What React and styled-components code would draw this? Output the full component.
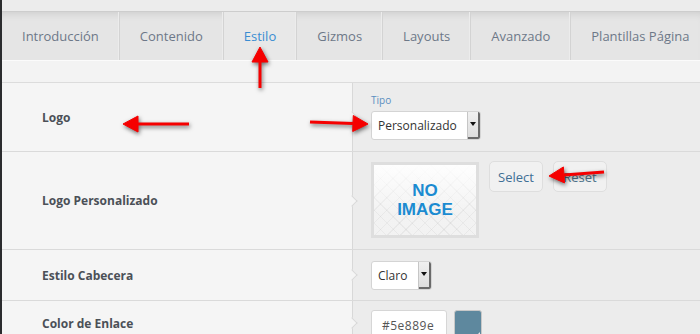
import React from 'react'
import styled, { createGlobalStyle } from 'styled-components'

const Global = createGlobalStyle`
    html, body {
        margin: 0;
        padding: 0;
        background: #ececec;
        overflow: hidden;
    }
    body {
        font-family: "Open Sans", "Noto Sans", sans-serif;
    }
`

const Frame = styled.div`
    position: relative;
    width: 700px;
    height: 334px;
    overflow: hidden;
`

const Shell = styled.div`
    display: flex;
    flex-direction: column;
    height: 100%;
    border-left: 2px solid #2b2c2e;
    background: #ececec;
    & > * {
        flex-shrink: 0;
    }
`

const TopBand = styled.div`
    height: 11px;
    background: #ececec;
    border-bottom: 1px solid #cdcdcd;
`

const TabBar = styled.div`
    display: flex;
    height: 48px;
    background: #e5e5e5;
    box-shadow: inset 0 7px 8px -6px rgba(0, 0, 0, 0.12);
    border-bottom: 1px solid #fbfbfb;
    white-space: nowrap;
`

const Tab = styled.div`
    display: flex;
    align-items: center;
    padding: 0 20px;
    font-size: 13px;
    color: ${props => props.active ? '#3a8dd2' : '#6d7888'};
    border-right: 1px solid #d3d3d3;
    box-shadow: inset -1px 0 0 #ececec;
    background: ${props => props.active ? '#e8e8e8' : 'transparent'};
    flex-shrink: 0;
`

const SubBar = styled.div`
    height: 21px;
    background: #f3f3f3;
    border-bottom: 1px solid #dcdcdc;
`

const Row = styled.div`
    display: grid;
    grid-template-columns: 350px 1fr;
    height: ${props => props.h}px;
    border-bottom: 1px solid #dadada;
`

const Label = styled.div`
    display: flex;
    align-items: ${props => props.top ? 'flex-start' : 'center'};
    padding: ${props => props.top ? '14px' : '0'} 0 0 40px;
    background: #f5f5f5;
    font-size: 12px;
    font-weight: 700;
    color: #4b5057;
`

const Field = styled.div`
    position: relative;
    display: flex;
    flex-direction: ${props => props.column ? 'column' : 'row'};
    align-items: ${props => props.center ? 'center' : 'flex-start'};
    gap: ${props => props.gap || 0}px;
    padding: ${props => props.pt || 0}px 18px 0;
    background: #ececec;
    border-left: 1px solid #d8d8d8;
    &::before {
        content: '';
        position: absolute;
        left: -5px;
        top: ${props => props.notch || '50%'};
        width: 7px;
        height: 7px;
        margin-top: -4px;
        background: #f5f5f5;
        border-top: 1px solid #d8d8d8;
        border-right: 1px solid #d8d8d8;
        transform: rotate(45deg);
    }
`

const Caption = styled.div`
    font-size: 10px;
    line-height: 14px;
    color: #5b8fc0;
    margin-bottom: 4px;
`

const SelectBox = styled.div`
    display: flex;
    align-items: stretch;
    width: ${props => props.w}px;
    height: 29px;
    background: #fff;
    border: 1px solid #d4d4d4;
    border-radius: 3px;
    box-sizing: border-box;
    overflow: hidden;
    font-size: 12px;
    color: #333;
`

const SelectText = styled.div`
    flex: 1;
    display: flex;
    align-items: center;
    padding-left: 6px;
`

const SelectArrow = styled.div`
    width: 12px;
    display: flex;
    align-items: center;
    justify-content: center;
    background: linear-gradient(#f0f0f0, #dcdcdc);
    border-left: 1px solid #c6c6c6;
    box-shadow: inset -2px -2px 0 #6a6a6a;
    &::after {
        content: '';
        margin: 0 2px 3px 0;
        border-left: 3px solid transparent;
        border-right: 3px solid transparent;
        border-top: 4px solid #111;
    }
`

const NoImage = styled.div`
    width: 108px;
    height: 76px;
    box-sizing: border-box;
    border: 3px solid #dedede;
    display: flex;
    align-items: center;
    justify-content: center;
    text-align: center;
    font-family: "Liberation Sans", Arial, sans-serif;
    font-weight: 700;
    font-size: 17px;
    line-height: 19px;
    color: #1b8bd1;
    background:
        linear-gradient(rgba(255,255,255,0.95), rgba(255,255,255,0.2) 70%),
        repeating-linear-gradient(45deg, #f7f7f7 0 8px, #eaeaea 8px 9px),
        repeating-linear-gradient(-45deg, #f7f7f7 0 8px, #eaeaea 8px 9px);
    background-blend-mode: normal, multiply, normal;
`

const Button = styled.div`
    width: 54px;
    height: 31px;
    box-sizing: border-box;
    display: flex;
    align-items: center;
    justify-content: center;
    border: 1px solid #dedede;
    border-radius: 5px;
    background: #f1f1f1;
    font-size: 13px;
    color: ${props => props.tone || '#3f6f95'};
    margin-top: -1px;
`

const ColorInput = styled.div`
    width: 76px;
    height: 30px;
    box-sizing: border-box;
    display: flex;
    align-items: center;
    padding-left: 10px;
    background: #fff;
    border: 1px solid #d6d6d6;
    border-radius: 3px;
    font-size: 12px;
    letter-spacing: 0.5px;
    color: #555;
`

const Swatch = styled.div`
    position: relative;
    width: 28px;
    height: 30px;
    box-sizing: border-box;
    background: #5e889e;
    border: 1px solid #c8c8c8;
    border-radius: 3px;
    &::after {
        content: '';
        position: absolute;
        right: 1px;
        bottom: 1px;
        border-left: 6px solid transparent;
        border-bottom: 6px solid #e8e8e8;
    }
`

const Overlay = styled.svg`
    position: absolute;
    left: 0;
    top: 0;
    pointer-events: none;
    filter: drop-shadow(1px 2px 2px rgba(0, 0, 0, 0.55));
`

const tabs = ['Introducción', 'Contenido', 'Estilo', 'Gizmos', 'Layouts', 'Avanzado', 'Plantillas Página']

function Arrow({ x1, y1, x2, y2 }) {
    // tail (x1,y1) -> tip (x2,y2)
    const dx = x2 - x1
    const dy = y2 - y1
    const len = Math.hypot(dx, dy)
    const ux = dx / len
    const uy = dy / len
    const bx = x2 - ux * 15
    const by = y2 - uy * 15
    const px = -uy * 8
    const py = ux * 8
    return (
        <g fill="#f50000" stroke="#f50000">
            <line x1={x1} y1={y1} x2={bx} y2={by} strokeWidth="3" />
            <polygon points={`${x2},${y2} ${bx + px},${by + py} ${bx - px},${by - py}`} strokeWidth="1" />
        </g>
    )
}

export default function App() {
    return (
        <Frame>
            <Global />
            <Shell>
                <TopBand />
                <TabBar>
                    {tabs.map(t => <Tab key={t} active={t === 'Estilo'}>{t}</Tab>)}
                </TabBar>
                <SubBar />
                <Row h={68}>
                    <Label>Logo</Label>
                    <Field column pt={10}>
                        <Caption>Tipo</Caption>
                        <SelectBox w={110}>
                            <SelectText>Personalizado</SelectText>
                            <SelectArrow />
                        </SelectBox>
                    </Field>
                </Row>
                <Row h={97}>
                    <Label>Logo Personalizado</Label>
                    <Field pt={10} gap={10}>
                        <NoImage>NO<br />IMAGE</NoImage>
                        <Button>Select</Button>
                        <Button tone="#50758c">Reset</Button>
                    </Field>
                </Row>
                <Row h={50}>
                    <Label>Estilo Cabecera</Label>
                    <Field center>
                        <SelectBox w={61}>
                            <SelectText>Claro</SelectText>
                            <SelectArrow />
                        </SelectBox>
                    </Field>
                </Row>
                <Row h={60}>
                    <Label top>Color de Enlace</Label>
                    <Field pt={9} gap={7} notch="22px">
                        <ColorInput>#5e889e</ColorInput>
                        <Swatch />
                    </Field>
                </Row>
            </Shell>
            <Overlay width="700" height="334" viewBox="0 0 700 334">
                <Arrow x1={260} y1={88} x2={260} y2={47} />
                <Arrow x1={189} y1={124} x2={123} y2={124} />
                <Arrow x1={310} y1={122} x2={368} y2={124} />
                <Arrow x1={604} y1={172} x2={549} y2={176} />
            </Overlay>
        </Frame>
    )
}
